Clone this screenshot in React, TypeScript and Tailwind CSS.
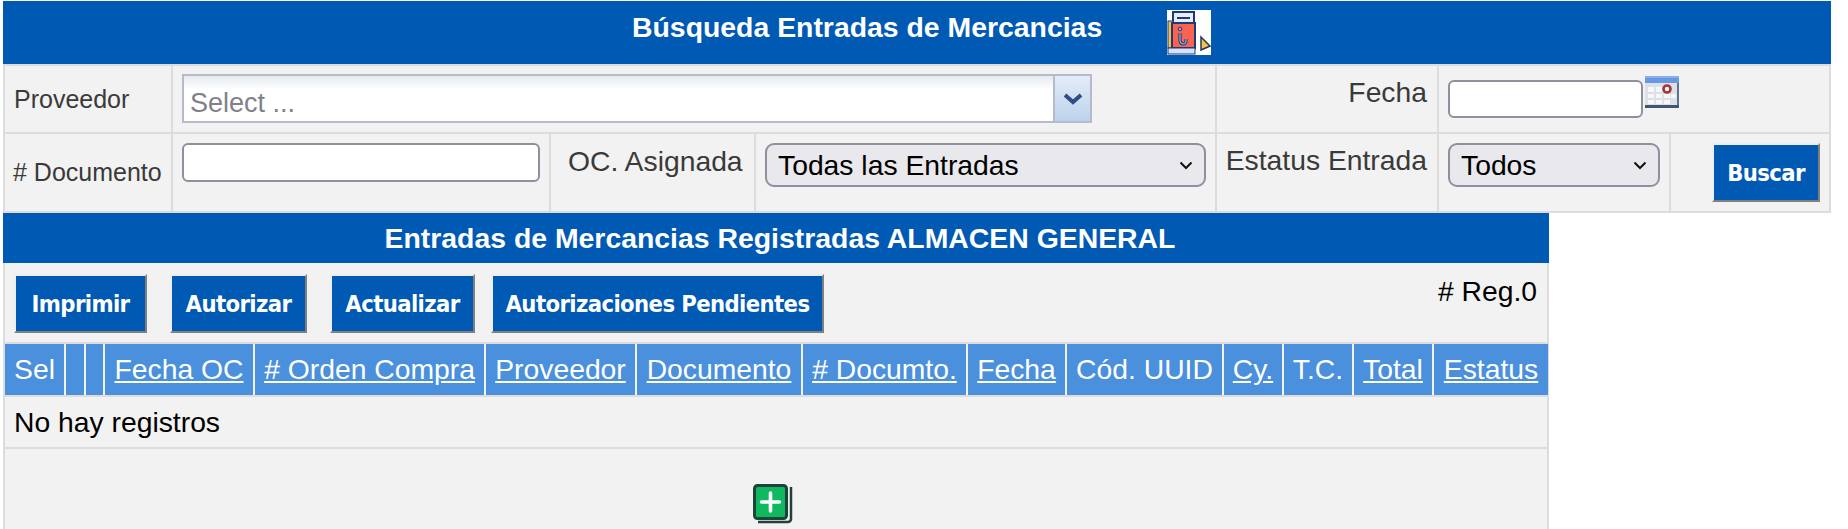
const sans = "font-['Liberation_Sans',Arial,sans-serif]";

const FileIcon = () => (
  <svg width="44" height="45" viewBox="0 0 44 45" className="bg-white">
    <rect x="6" y="2" width="21" height="12" fill="#e8eef8" stroke="#1f3a78" strokeWidth="2" />
    <rect x="10" y="7" width="13" height="2" fill="#1f3a78" />
    <rect x="1" y="11" width="5" height="27" fill="#f2c14e" stroke="#1f3a78" strokeWidth="1" />
    <rect x="5" y="13" width="23" height="25" fill="#f9634f" stroke="#1f3a78" strokeWidth="2" />
    <circle cx="13" cy="19" r="1.8" fill="#8fb0ea" stroke="#1f3a78" />
    <path d="M13 23v7c0 5 6 5 6 1v-2" fill="none" stroke="#1f3a78" strokeWidth="3.2" />
    <path d="M13 23v7c0 5 6 5 6 1v-2" fill="none" stroke="#8fb0ea" strokeWidth="1.2" />
    <rect x="1" y="38" width="27" height="6" fill="#d6e2f5" stroke="#1f3a78" strokeWidth="1" />
    <path d="M34 27l9 9-9 4z" fill="#f4c542" stroke="#27375f" strokeWidth="1.5" />
  </svg>
);

const CalendarIcon = () => (
  <svg width="34" height="32" viewBox="0 0 34 32" className="shrink-0">
    <rect x="0" y="0" width="34" height="32" fill="#dde1e6" />
    <rect x="0" y="0" width="34" height="7" fill="#6a97e2" />
    <rect x="0" y="0" width="34" height="2" fill="#86aef0" />
    <rect x="32" y="7" width="2" height="25" fill="#5b7390" />
    <rect x="0" y="29" width="34" height="3" fill="#3c5674" />
    <path d="M3 11h6v5H3zM11 11h6v5h-6zM3 18h6v4H3zM11 18h6v4h-6zM19 18h6v4h-6zM26 18h5v4h-5zM3 24h6v4H3zM11 24h6v4h-6zM19 24h6v4h-6z" fill="#f6f7f9" />
    <circle cx="22" cy="13" r="3.5" fill="#f6f7f9" stroke="#a8323a" strokeWidth="2.6" />
  </svg>
);

const PlusIcon = () => (
  <svg width="40" height="40" viewBox="0 0 40 40">
    <path d="M38 3v32a3 3 0 0 1-3 3H5" fill="none" stroke="#24403a" strokeWidth="2.5" />
    <rect x="1.5" y="1.5" width="32" height="33" rx="3" fill="#10b860" stroke="#1c4438" strokeWidth="3" />
    <path d="M17.5 9v18M8.5 18h18" stroke="#fff" strokeWidth="3.6" strokeLinecap="round" />
  </svg>
);

const Chevron = () => (
  <svg width="14" height="9" viewBox="0 0 14 9" className="shrink-0">
    <path d="M1.5 1.5 7 7l5.5-5.5" fill="none" stroke="#111" strokeWidth="2" />
  </svg>
);

const FakeSelect = ({ value, className }: { value: string; className: string }) => (
  <div className={`flex h-[44px] items-center justify-between rounded-[9px] border-2 border-[#8f8f9d] bg-[#e9e9ed] pl-[11px] pr-[11px] text-[28.3px] text-black ${className}`}>
    <span>{value}</span>
    <Chevron />
  </div>
);

const Btn = ({ label, className }: { label: string; className: string }) => (
  <button className={`flex h-[59px] items-center justify-center border-2 border-t-[#eeeeee] border-l-[#eeeeee] border-r-[#808080] border-b-[#808080] bg-[#0059b3] pt-[2px] font-['DejaVu_Sans',sans-serif] text-[23.6px] font-bold tracking-[-0.6px] text-white font-stretch-condensed ${className}`}>
    {label}
  </button>
);

const columns = [
  { label: 'Sel', w: 'w-[59px]', link: false },
  { label: '', w: 'w-[18px]', link: false },
  { label: '', w: 'w-[17px]', link: false },
  { label: 'Fecha OC', w: 'w-[148px]', link: true },
  { label: '# Orden Compra', w: 'w-[229px]', link: true },
  { label: 'Proveedor', w: 'w-[149px]', link: true },
  { label: 'Documento', w: 'w-[164px]', link: true },
  { label: '# Documto.', w: 'w-[163px]', link: true },
  { label: 'Fecha', w: 'w-[97px]', link: true },
  { label: 'Cód. UUID', w: 'w-[155px]', link: false },
  { label: 'Cy.', w: 'w-[58px]', link: true },
  { label: 'T.C.', w: 'w-[68px]', link: false },
  { label: 'Total', w: 'w-[78px]', link: true },
  { label: 'Estatus', w: 'w-[114px]', link: true },
];

export default function App() {
  return (
    <div className={`h-[529px] overflow-hidden bg-white pl-[3px] pt-px ${sans}`}>
      {/* Busqueda */}
      <div className="w-[1828px]">
        <div className="flex h-[63px] items-center bg-[#0059b3] pb-[10px] text-white">
          <span className="ml-[629px] text-[28.4px] font-bold">Búsqueda Entradas de Mercancias</span>
          <span className="ml-[65px] mt-[9px] self-start"><FileIcon /></span>
        </div>
        <div className="border-2 border-[#dcdcdc] bg-[#f2f2f2] text-[28.3px] text-[#3a3a3a]">
          <div className="flex h-[68px] border-b-2 border-[#dcdcdc]">
            <div className="flex w-[168px] items-center border-r-2 border-[#dcdcdc] pl-[9px] pt-[2px] text-[25px]">Proveedor</div>
            <div className="w-[1044px] border-r-2 border-[#dcdcdc] pl-[9px] pt-[8px]">
              <div className="flex h-[49px] w-[910px] border-2 border-[#b7b9cc] bg-gradient-to-b from-[#e6ebee] from-0% via-white via-30% to-white">
                <div className="flex flex-1 items-center pl-[6px] pt-[9px] text-[27px] text-[#80808a]">Select ...</div>
                <div className="flex w-[37px] items-center justify-center border-l-2 border-[#b7b9cc] bg-gradient-to-b from-[#e3edf8] to-[#bcd2ec]">
                  <svg width="20" height="12" viewBox="0 0 20 12"><path d="M2 2l8 7 8-7" fill="none" stroke="#2f4d87" strokeWidth="4" /></svg>
                </div>
              </div>
            </div>
            <div className="w-[222px] border-r-2 border-[#dcdcdc] pr-[10px] pt-[5px] text-right">Fecha</div>
            <div className="flex flex-1 items-start pl-[9px]">
              <div className="mt-[14px] h-[38px] w-[195px] rounded-[6px] border-2 border-[#8f8f9d] bg-white" />
              <span className="mt-[10px] ml-[2px]"><CalendarIcon /></span>
            </div>
          </div>
          <div className="flex h-[77px]">
            <div className="flex w-[168px] items-start border-r-2 border-[#dcdcdc] pl-[8px] pt-[20px] text-[25px]">
              <span className="whitespace-nowrap">#&nbsp;Documento</span>
            </div>
            <div className="w-[378px] border-r-2 border-[#dcdcdc] pl-[9px] pt-[9px]">
              <div className="h-[39px] w-[358px] rounded-[6px] border-2 border-[#8f8f9d] bg-white" />
            </div>
            <div className="w-[205px] whitespace-nowrap border-r-2 border-[#dcdcdc] pl-[17px] pt-[6px]">OC. Asignada</div>
            <div className="w-[461px] border-r-2 border-[#dcdcdc] pl-[9px] pt-[9px]">
              <FakeSelect value="Todas las Entradas" className="w-[441px]" />
            </div>
            <div className="w-[222px] whitespace-nowrap border-r-2 border-[#dcdcdc] pr-[10px] pt-[5px] text-right">Estatus Entrada</div>
            <div className="w-[232px] border-r-2 border-[#dcdcdc] pl-[9px] pt-[9px]">
              <FakeSelect value="Todos" className="w-[212px]" />
            </div>
            <div className="flex flex-1 justify-end pr-[9px] pt-[9px]">
              <Btn label="Buscar" className="w-[108px]" />
            </div>
          </div>
        </div>
      </div>

      {/* Entradas registradas */}
      <div className="w-[1546px]">
        <div className="flex h-[50px] items-center justify-center bg-[#0059b3] pl-[8px] text-[28.4px] font-bold text-white">
          Entradas de Mercancias Registradas ALMACEN GENERAL
        </div>
        <div className="h-[266px] border-x-2 border-[#dcdcdc] bg-[#f2f2f2]">
          <div className="flex h-[81px] justify-between border-b-2 border-[#dcdcdc] pl-[9px] pr-[10px] pt-[11px]">
            <div className="flex">
              <Btn label="Imprimir" className="w-[133px]" />
              <Btn label="Autorizar" className="ml-[23px] w-[137px]" />
              <Btn label="Actualizar" className="ml-[23px] w-[145px]" />
              <Btn label="Autorizaciones Pendientes" className="ml-[16px] w-[333px]" />
            </div>
            <span className="-mt-[4px] text-[28.3px] text-black">#&nbsp;Reg.0</span>
          </div>
          <div className="flex h-[53px] gap-[2px] border-b-2 border-[#dcdcdc] text-[28.3px] text-white">
            {columns.map((col, i) => (
              <div key={i} className={`flex shrink-0 items-center justify-center bg-[#4a90dd] ${col.w} ${col.link ? 'underline' : ''}`}>
                {col.label}
              </div>
            ))}
          </div>
          <div className="flex h-[52px] items-center border-b-2 border-[#dcdcdc] pl-[9px] text-[28.3px] text-black">No hay registros</div>
          <div className="flex justify-center pr-[7px] pt-[35px]">
            <PlusIcon />
          </div>
        </div>
      </div>
    </div>
  );
}
